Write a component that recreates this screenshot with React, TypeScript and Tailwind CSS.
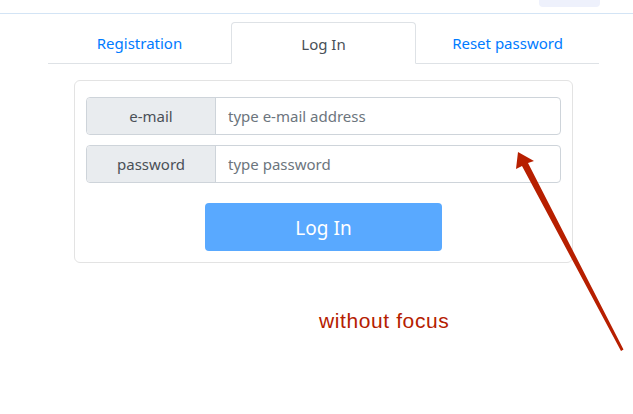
import React, { useState } from "react";

const tabs = ["Registration", "Log In", "Reset password"];

function Arrow() {
  // tail (622,350) -> tip (518,152)
  return (
    <svg
      className="absolute left-0 top-0 pointer-events-none"
      width="633"
      height="414"
      viewBox="0 0 633 414"
    >
      <polygon
        points="518,152 516,169 522,166 621,351 623.5,349.5 528,163 534,161"
        fill="#b71f00"
      />
    </svg>
  );
}

export default function App() {
  const [active, setActive] = useState(1);
  const [email, setEmail] = useState("");
  const [password, setPassword] = useState("");

  return (
    <div className="relative w-[633px] h-[414px] bg-white overflow-hidden font-['Noto_Sans',sans-serif]">
      <div className="h-[14px] border-b border-[#d3e4f5] flex justify-end pr-[33px]">
        <div className="w-[61px] h-[7px] bg-[#eef1fc] rounded-b-[4px]" />
      </div>

      <div className="ml-[48px] mt-[8px] w-[551px] flex border-b border-[#dee2e6]">
        {tabs.map((tab, i) => (
          <button
            key={tab}
            onClick={() => setActive(i)}
            className={
              i === active
                ? "flex-1 h-[42px] -mb-px pt-[2px] bg-white border border-[#dee2e6] border-b-white rounded-t-[4px] text-[15px] text-[#495057]"
                : "flex-1 h-[41px] pt-[2px] text-[15px] text-[#007bff]"
            }
          >
            {tab}
          </button>
        ))}
      </div>

      <div className="ml-[74px] mt-[16px] w-[499px] border border-[#e3e3e3] rounded-[6px] px-[11px] pt-[16px] pb-[11px]">
        <div className="flex h-[38px] rounded-[4px] border border-[#ced4da] text-[15px]">
          <div className="w-[129px] flex items-center justify-center bg-[#e9ecef] border-r border-[#ced4da] rounded-l-[4px] text-[#495057]">
            e-mail
          </div>
          <input
            value={email}
            onChange={(e) => setEmail(e.currentTarget.value)}
            placeholder="type e-mail address"
            className="flex-1 px-[12px] outline-none text-[#495057] placeholder:text-[#6c757d] rounded-r-[4px]"
          />
        </div>
        <div className="mt-[10px] flex h-[38px] rounded-[4px] border border-[#ced4da] text-[15px]">
          <div className="w-[129px] flex items-center justify-center bg-[#e9ecef] border-r border-[#ced4da] rounded-l-[4px] text-[#495057]">
            password
          </div>
          <input
            type="password"
            value={password}
            onChange={(e) => setPassword(e.currentTarget.value)}
            placeholder="type password"
            className="flex-1 px-[12px] outline-none text-[#495057] placeholder:text-[#6c757d] rounded-r-[4px]"
          />
        </div>
        <div className="mt-[20px] flex justify-center">
          <button
            disabled
            className="w-[237px] h-[48px] pt-[2px] rounded-[4px] bg-[#59a9ff] text-white text-[19px]"
          >
            Log In
          </button>
        </div>
      </div>

      <div className="absolute left-[319px] top-[308px] text-[21px] leading-[26px] tracking-[0.6px] text-[#b52000] font-['Liberation_Sans',sans-serif]">
        without focus
      </div>
      <Arrow />
    </div>
  );
}
